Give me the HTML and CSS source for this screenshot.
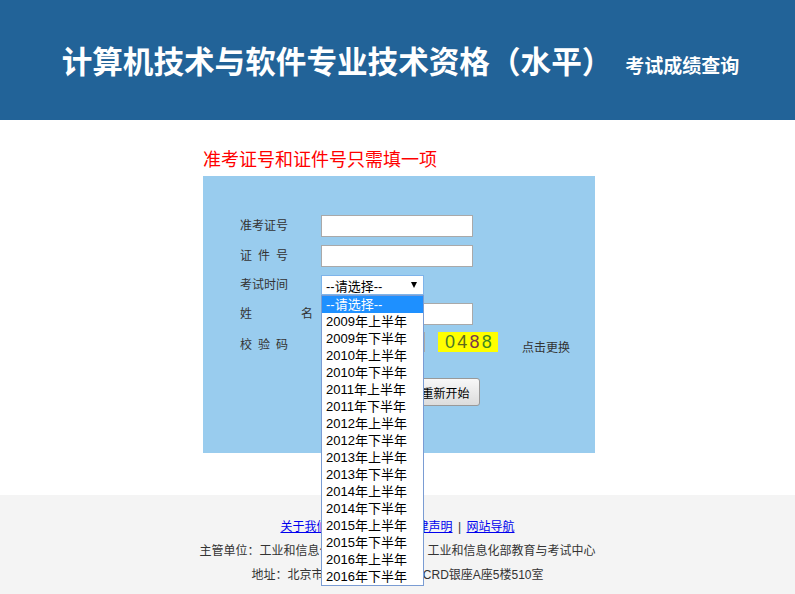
FILE: index.html
```html
<!DOCTYPE html>
<html lang="zh-CN">
<head>
  <meta charset="UTF-8">
  <title>考试成绩查询</title>
  <link rel="stylesheet" href="styles.css">
</head>
<body>
  <div class="header">
    <h1>计算机技术与软件专业技术资格（水平）<small>考试成绩查询</small></h1>
  </div>

  <div class="main">
    <div class="note">准考证号和证件号只需填一项</div>
    <div class="panel">
      <div class="row">
        <span class="label"><span class="jt">准考证号</span></span>
        <input type="text" class="field">
      </div>
      <div class="row">
        <span class="label"><span class="jt">证件号</span></span>
        <input type="text" class="field">
      </div>
      <div class="row row-select">
        <span class="label"><span class="jt">考试时间</span></span>
        <div class="select-wrap">
          <div class="select">
            <span>--请选择--</span>
            <i class="arrow"></i>
          </div>
          <ul class="options">
            <li class="active">--请选择--</li>
            <li>2009年上半年</li>
            <li>2009年下半年</li>
            <li>2010年上半年</li>
            <li>2010年下半年</li>
            <li>2011年上半年</li>
            <li>2011年下半年</li>
            <li>2012年上半年</li>
            <li>2012年下半年</li>
            <li>2013年上半年</li>
            <li>2013年下半年</li>
            <li>2014年上半年</li>
            <li>2014年下半年</li>
            <li>2015年上半年</li>
            <li>2015年下半年</li>
            <li>2016年上半年</li>
            <li>2016年下半年</li>
          </ul>
        </div>
      </div>
      <div class="row row-name">
        <span class="label"><span class="jt wide">姓名</span></span>
        <input type="text" class="field">
      </div>
      <div class="row row-code">
        <span class="label"><span class="jt">校验码</span></span>
        <input type="text" class="field short">
        <span class="captcha"><b class="c1">0</b><b class="c2">4</b><b class="c3">8</b><b class="c4">8</b></span>
        <span class="refresh">点击更换</span>
      </div>
      <div class="actions">
        <button class="btn btn-query">查 询</button>
        <button class="btn">重新开始</button>
      </div>
    </div>
  </div>

  <div class="footer">
    <div class="links">
      <a href="#">关于我们</a><span class="sep">|</span><a href="#">联系我们</a><span class="sep">|</span><a href="#">法律声明</a><span class="sep">|</span><a href="#">网站导航</a>
    </div>
    <div>主管单位：工业和信息化部　　主办单位：工业和信息化部教育与考试中心</div>
    <div>地址：北京市朝阳区东三环北路  CRD银座A座5楼510室</div>
  </div>
</body>
</html>
```

FILE: styles.css
```css
body {
  margin: 0;
  font-family: "Liberation Sans", "Noto Sans CJK SC", sans-serif;
  color: #333;
  background: #fff;
}
.header {
  height: 120px;
  background: #226398;
  display: flex;
  align-items: center;
  justify-content: center;
  padding-left: 6px;
}
.header h1 {
  margin: 0;
  display: flex;
  align-items: baseline;
  font-family: "Noto Sans CJK SC", sans-serif;
  font-size: 30.6px;
  font-weight: bold;
  color: #fff;
  line-height: 1;
  text-spacing-trim: space-all;
}
.header small {
  font-size: 19px;
  margin-left: 13px;
}
.main {
  width: 392px;
  margin: 0 auto;
  padding: 28px 0 0 3px;
}
.note {
  color: #ff0000;
  font-size: 18px;
  line-height: 24px;
  margin-bottom: 4px;
}
.panel {
  background: #99ccee;
  height: 277px;
  box-sizing: border-box;
  padding: 39px 0 0 37px;
}
.row {
  display: flex;
  align-items: center;
  height: 22px;
  margin-bottom: 8px;
}
.row-select {
  height: 20px;
}
.row-name {
  margin-bottom: 7px;
}
.row-code {
  height: 20px;
  align-items: flex-end;
}
.label {
  width: 81px;
  font-size: 12px;
  line-height: 14px;
  flex-shrink: 0;
}
.jt {
  display: inline-block;
  width: 48px;
  text-align: justify;
  text-align-last: justify;
}
.jt.wide {
  width: 73px;
}
.field {
  width: 152px;
  height: 22px;
  box-sizing: border-box;
  margin: 0;
  padding: 0 3px;
  border: 1px solid #a9a9a9;
  background: #fff;
}
.field.short {
  width: 104px;
  height: 20px;
}
.select-wrap {
  position: relative;
}
.select {
  width: 103px;
  height: 20px;
  box-sizing: border-box;
  border: 1px solid #7eb4ea;
  background: #fff;
  display: flex;
  align-items: center;
  justify-content: space-between;
  padding: 0 6px 0 4px;
  font-size: 13px;
  color: #000;
}
.arrow {
  width: 0;
  height: 0;
  border-left: 3px solid transparent;
  border-right: 3px solid transparent;
  border-top: 6px solid #000;
}
.options {
  position: absolute;
  top: 100%;
  left: 0;
  z-index: 10;
  width: 103px;
  box-sizing: border-box;
  margin: 0;
  padding: 0;
  list-style: none;
  background: #fff;
  border: 1px solid #7a9cd3;
}
.options li {
  height: 17px;
  line-height: 17px;
  padding-left: 4px;
  font-size: 13px;
  color: #000;
  white-space: nowrap;
}
.options li.active {
  background: #1e90ff;
  color: #fff;
}
.captcha {
  width: 60px;
  height: 20px;
  margin-left: 13px;
  box-sizing: border-box;
  padding-left: 7px;
  background: #ffff00;
  font-size: 18px;
  line-height: 20px;
  letter-spacing: 2.2px;
  font-family: "Liberation Sans", sans-serif;
}
.captcha b {
  font-weight: normal;
}
.c1 { color: #4a7a2a; }
.c2 { color: #5e6a1c; }
.c3 { color: #7a3a4a; }
.c4 { color: #3e8a20; }
.refresh {
  margin-left: 24px;
  margin-bottom: -3px;
  font-size: 12px;
  line-height: 14px;
}
.actions {
  display: flex;
  gap: 10px;
  margin-top: 26px;
  padding-left: 91px;
}
.btn {
  height: 28px;
  width: 69px;
  padding: 0;
  font-family: inherit;
  font-size: 12px;
  color: #000;
  border: 1px solid #999;
  border-radius: 3px;
  background: linear-gradient(#f8f8f8, #dcdcdc);
}
.btn-query {
  width: 70px;
}
.footer {
  margin-top: 42px;
  background: #f4f4f4;
  padding: 20px 0 30px;
  text-align: center;
  font-size: 12px;
  line-height: 24px;
  color: #333;
}
.links a {
  color: #0000ee;
}
.sep {
  display: inline-block;
  width: 14px;
  text-align: center;
  color: #333;
}
```
